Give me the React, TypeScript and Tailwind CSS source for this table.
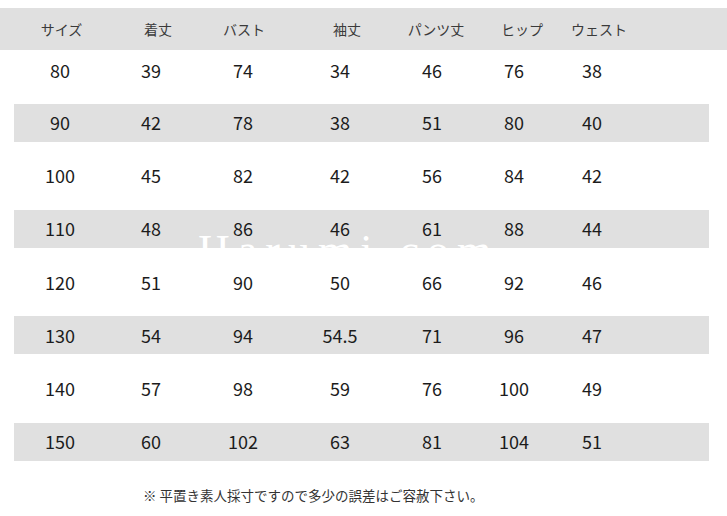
import React from 'react';

const headers = ['サイズ', '着丈', 'バスト', '袖丈', 'パンツ丈', 'ヒップ', 'ウェスト'];

const rows: string[][] = [
  ['80', '39', '74', '34', '46', '76', '38'],
  ['90', '42', '78', '38', '51', '80', '40'],
  ['100', '45', '82', '42', '56', '84', '42'],
  ['110', '48', '86', '46', '61', '88', '44'],
  ['120', '51', '90', '50', '66', '92', '46'],
  ['130', '54', '94', '54.5', '71', '96', '47'],
  ['140', '57', '98', '59', '76', '100', '49'],
  ['150', '60', '102', '63', '81', '104', '51'],
];

const font = { fontFamily: '"Noto Sans CJK JP", "Noto Sans", sans-serif' };

const Cells: React.FC<{ values: string[] }> = ({ values }) => (
  <div className="grid h-full w-full grid-cols-[92px_90px_94px_100px_84px_80px_76px] items-center text-[18px] text-[#1c1c1c]">
    {values.map((v, i) => (
      <span key={i} className="text-center">
        {v}
      </span>
    ))}
  </div>
);

const App: React.FC = () => {
  const [first, ...rest] = rows;

  return (
    <div className="relative h-[516px] w-[727px] overflow-hidden bg-white" style={font}>
      <div className="mt-[8px] grid h-[42px] grid-cols-[123px_70px_102px_104px_74px_98px_56px] items-center bg-[#e0e0e0] text-[14px] text-[#3a3a3a]">
        {headers.map((h) => (
          <span key={h} className="text-center">
            {h}
          </span>
        ))}
      </div>

      <div className="flex h-[40px] items-center pl-[14px] pr-[18px]">
        <Cells values={first} />
      </div>

      <div className="mt-[6px] flex flex-col">
        {rest.map((r, i) => (
          <div key={r[0]} className="flex h-[53.2px] items-center pl-[14px] pr-[18px]">
            <div className={i % 2 === 0 ? 'h-[38px] w-full bg-[#e0e0e0]' : 'h-[38px] w-full'}>
              <Cells values={r} />
            </div>
          </div>
        ))}
      </div>

      <p className="mt-[17px] pl-[143px] text-[13.5px] leading-[20px] text-[#333]">
        ※ 平置き素人採寸ですので多少の誤差はご容赦下さい。
      </p>

      {/* faint watermark, only shows over the grey band */}
      <div
        className="pointer-events-none absolute left-[198px] top-[229px] text-[44px] leading-none tracking-[8px] text-white"
        style={{ fontFamily: '"Liberation Serif", serif' }}
      >
        Harumi.com
      </div>
    </div>
  );
};

export default App;
